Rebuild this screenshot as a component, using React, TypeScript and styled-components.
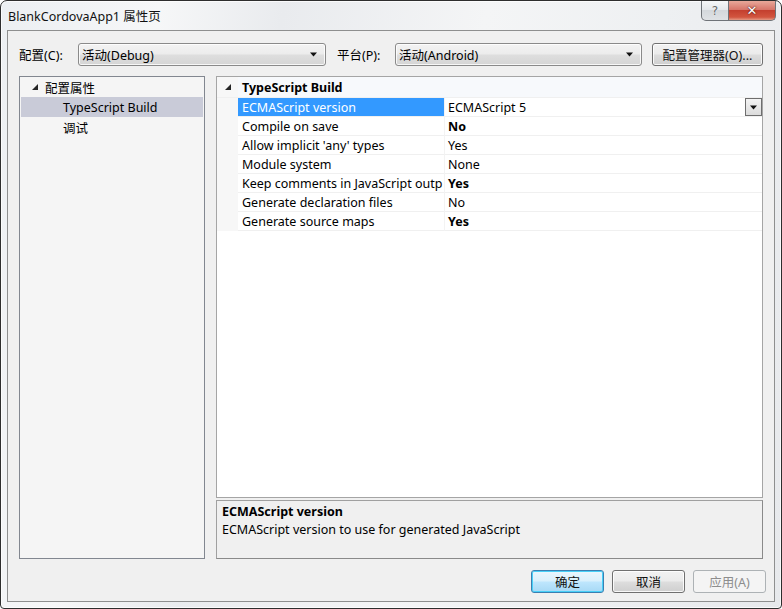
import React from 'react';
import styled, { createGlobalStyle, css } from 'styled-components';

const GlobalStyle = createGlobalStyle`
  html, body {
    margin: 0;
    padding: 0;
    background: #ffffff;
  }
  body {
    font-family: "Noto Sans", "Noto Sans CJK SC", sans-serif;
    font-size: 12.5px;
    color: #000;
  }
  * { box-sizing: border-box; }
`;

const uiFont = `"Noto Sans", "Noto Sans CJK SC", sans-serif`;
const fs = '12.5px';

const Window = styled.div`
  width: 782px;
  height: 609px;
  display: flex;
  flex-direction: column;
  padding: 0 6px 6px 6px;
  border: 1px solid #2e2e2e;
  border-radius: 7px 7px 4px 4px;
  background: linear-gradient(100deg, #eceff2 0%, #f6f7f8 18%, #e9ebee 32%, #f4f5f6 55%, #eef0f2 75%, #e7e9ec 100%);
  box-shadow: inset 0 0 0 1px rgba(255, 255, 255, 0.75);
  font-family: ${uiFont};
`;

const TitleBar = styled.div`
  height: 29px;
  display: flex;
  align-items: flex-start;
  justify-content: space-between;
`;

const Title = styled.div`
  padding: 5px 0 0 1px;
  font-size: ${fs};
  color: #111;
`;

const CaptionButtons = styled.div`
  display: flex;
  margin-right: -1px;
`;

const CaptionButton = styled.div<{ $close?: boolean }>`
  height: 20px;
  display: flex;
  align-items: center;
  justify-content: center;
  border: 1px solid #6f7378;
  border-top: none;
  font-family: "DejaVu Sans", sans-serif;
  ${({ $close }) =>
    $close
      ? css`
          width: 47px;
          border-radius: 0 0 5px 0;
          border-left: none;
          background: linear-gradient(#e8a89a 0%, #d7766a 45%, #c4402f 50%, #d2553f 85%, #e49a85 100%);
          color: #fff;
          font-size: 13px;
          font-weight: bold;
          text-shadow: 0 0 2px #5a1a12, 0 0 1px #5a1a12;
        `
      : css`
          width: 28px;
          border-radius: 0 0 0 5px;
          background: linear-gradient(#f6f7f8 0%, #e5e8eb 45%, #d4d8dc 50%, #dfe2e5 100%);
          color: #666;
          font-size: 12px;
          text-shadow: 0 0 1px #fff;
        `}
`;

const Client = styled.div`
  flex: 1;
  display: flex;
  flex-direction: column;
  border: 1px solid #8e8f8f;
  background: #f0f0f0;
  padding: 12px 11px 8px 11px;
`;

const ConfigRow = styled.div`
  height: 23px;
  display: flex;
  align-items: center;
`;

const FieldLabel = styled.div<{ $w: number; $gap?: number }>`
  width: ${({ $w }) => $w}px;
  margin-left: ${({ $gap }) => $gap || 0}px;
  font-size: ${fs};
`;

const Combo = styled.div<{ $w: number }>`
  width: ${({ $w }) => $w}px;
  height: 23px;
  display: flex;
  align-items: center;
  justify-content: space-between;
  padding: 0 8px 0 3px;
  border: 1px solid #8a8a8a;
  border-radius: 3px;
  background: linear-gradient(#f3f3f3 0%, #ececec 48%, #dedede 52%, #d5d5d5 100%);
  box-shadow: inset 0 0 0 1px rgba(255, 255, 255, 0.8);
  font-size: ${fs};
`;

const ArrowDown = ({ size = 7 }: { size?: number }) => (
  <svg width={size} height={Math.ceil(size / 2) + 1} viewBox="0 0 7 4">
    <polygon points="0,0 7,0 3.5,4" fill="#111" />
  </svg>
);

const PushButton = styled.div<{ $w: number; $kind?: 'default' | 'disabled' }>`
  width: ${({ $w }) => $w}px;
  height: 23px;
  display: flex;
  align-items: center;
  justify-content: center;
  border: 1px solid #707070;
  border-radius: 3px;
  background: linear-gradient(#f2f2f2 0%, #ebebeb 48%, #dddddd 52%, #cfcfcf 100%);
  box-shadow: inset 0 0 0 1px rgba(255, 255, 255, 0.85);
  font-size: ${fs};
  color: #111;
  ${({ $kind }) =>
    $kind === 'default' &&
    css`
      border-color: #3c7fb1;
      background: linear-gradient(#eaf6fd 0%, #d9f0fc 48%, #bee6fd 52%, #a7d9f5 100%);
      box-shadow: inset 0 0 0 1px #48d0f8;
    `}
  ${({ $kind }) =>
    $kind === 'disabled' &&
    css`
      border-color: #adb2b5;
      background: #f4f4f4;
      box-shadow: none;
      color: #8d8d8d;
    `}
`;

const Spacer = styled.div`
  flex: 1;
`;

const Main = styled.div`
  display: flex;
  height: 483px;
  margin-top: 10px;
  gap: 11px;
`;

const TreePanel = styled.div`
  width: 186px;
  border: 1px solid #828790;
  background: #f5f5f5;
  padding: 0 1px;
`;

const TreeRow = styled.div<{ $indent: number; $selected?: boolean }>`
  height: 20px;
  display: flex;
  align-items: center;
  padding-left: ${({ $indent }) => $indent}px;
  font-size: ${fs};
  background: ${({ $selected }) => ($selected ? '#c9cbd8' : 'transparent')};
`;

const Expander = styled.svg`
  margin-right: 7px;
  flex-shrink: 0;
`;

const Triangle = () => (
  <Expander width="6" height="6" viewBox="0 0 6 6">
    <polygon points="6,0 6,6 0,6" fill="#262626" />
  </Expander>
);

const RightColumn = styled.div`
  flex: 1;
  display: flex;
  flex-direction: column;
  gap: 2px;
`;

const Grid = styled.div`
  flex: 1;
  border: 1px solid #a5a5a5;
  background: #ffffff;
  display: flex;
  flex-direction: column;
`;

const GridHeader = styled.div`
  height: 21px;
  display: flex;
  align-items: center;
  background: #f7f9fc;
  border-bottom: 1px solid #f0f0f0;
  font-size: ${fs};
  font-weight: bold;
`;

const Gutter = styled.div`
  width: 21px;
  height: 100%;
  flex-shrink: 0;
  display: flex;
  align-items: center;
  justify-content: center;
  background: #f7f7f7;
`;

const HeaderText = styled.div`
  padding-left: 4px;
`;

const GridRow = styled.div`
  height: 19px;
  display: flex;
  align-items: stretch;
  font-size: ${fs};
`;

const NameCell = styled.div<{ $selected?: boolean }>`
  width: 207px;
  flex-shrink: 0;
  display: flex;
  align-items: center;
  padding-left: 4px;
  white-space: nowrap;
  overflow: hidden;
  border-bottom: 1px solid #f0f0f0;
  border-right: 1px solid #f3f3f3;
  background: ${({ $selected }) => ($selected ? '#3399ff' : '#fff')};
  color: ${({ $selected }) => ($selected ? '#fff' : '#000')};
`;

const ValueCell = styled.div<{ $bold?: boolean }>`
  flex: 1;
  display: flex;
  align-items: center;
  justify-content: space-between;
  padding-left: 3px;
  border-bottom: 1px solid #f0f0f0;
  font-weight: ${({ $bold }) => ($bold ? 'bold' : 'normal')};
`;

const DropButton = styled.div`
  width: 17px;
  height: 18px;
  display: flex;
  align-items: center;
  justify-content: center;
  border: 1px solid #6e6e6e;
  background: linear-gradient(#f4f4f4, #dcdcdc);
`;

const DescPanel = styled.div`
  height: 59px;
  border: 1px solid #a0a0a0;
  border-right-color: #8a8a8a;
  border-bottom-color: #8a8a8a;
  background: #f0f0f0;
  padding: 2px 5px;
  font-size: ${fs};
`;

const DescTitle = styled.div`
  font-weight: bold;
  line-height: 18px;
`;

const DescText = styled.div`
  line-height: 18px;
`;

const ButtonRow = styled.div`
  display: flex;
  justify-content: flex-end;
  gap: 8px;
  margin-top: 11px;
  margin-right: -3px;
`;

const rows: { name: string; value: string; bold?: boolean }[] = [
  { name: 'ECMAScript version', value: 'ECMAScript 5' },
  { name: 'Compile on save', value: 'No', bold: true },
  { name: "Allow implicit 'any' types", value: 'Yes' },
  { name: 'Module system', value: 'None' },
  { name: 'Keep comments in JavaScript outp', value: 'Yes', bold: true },
  { name: 'Generate declaration files', value: 'No' },
  { name: 'Generate source maps', value: 'Yes', bold: true },
];

export default function App() {
  return (
    <>
      <GlobalStyle />
      <Window>
        <TitleBar>
          <Title>BlankCordovaApp1 属性页</Title>
          <CaptionButtons>
            <CaptionButton>?</CaptionButton>
            <CaptionButton $close>✕</CaptionButton>
          </CaptionButtons>
        </TitleBar>
        <Client>
          <ConfigRow>
            <FieldLabel $w={59}>配置(C):</FieldLabel>
            <Combo $w={248}>
              <span>活动(Debug)</span>
              <ArrowDown />
            </Combo>
            <FieldLabel $w={58} $gap={11}>平台(P):</FieldLabel>
            <Combo $w={247}>
              <span>活动(Android)</span>
              <ArrowDown />
            </Combo>
            <Spacer />
            <PushButton $w={111}>配置管理器(O)...</PushButton>
          </ConfigRow>
          <Main>
            <TreePanel>
              <TreeRow $indent={11}>
                <Triangle />
                配置属性
              </TreeRow>
              <TreeRow $indent={42} $selected>TypeScript Build</TreeRow>
              <TreeRow $indent={42}>调试</TreeRow>
            </TreePanel>
            <RightColumn>
              <Grid>
                <GridHeader>
                  <Gutter>
                    <svg width="6" height="6" viewBox="0 0 6 6">
                      <polygon points="6,0 6,6 0,6" fill="#262626" />
                    </svg>
                  </Gutter>
                  <HeaderText>TypeScript Build</HeaderText>
                </GridHeader>
                {rows.map((r, i) => (
                  <GridRow key={r.name}>
                    <Gutter />
                    <NameCell $selected={i === 0}>{r.name}</NameCell>
                    <ValueCell $bold={r.bold}>
                      <span>{r.value}</span>
                      {i === 0 && (
                        <DropButton>
                          <ArrowDown />
                        </DropButton>
                      )}
                    </ValueCell>
                  </GridRow>
                ))}
              </Grid>
              <DescPanel>
                <DescTitle>ECMAScript version</DescTitle>
                <DescText>ECMAScript version to use for generated JavaScript</DescText>
              </DescPanel>
            </RightColumn>
          </Main>
          <ButtonRow>
            <PushButton $w={73} $kind="default">确定</PushButton>
            <PushButton $w={73}>取消</PushButton>
            <PushButton $w={73} $kind="disabled">应用(A)</PushButton>
          </ButtonRow>
        </Client>
      </Window>
    </>
  );
}
